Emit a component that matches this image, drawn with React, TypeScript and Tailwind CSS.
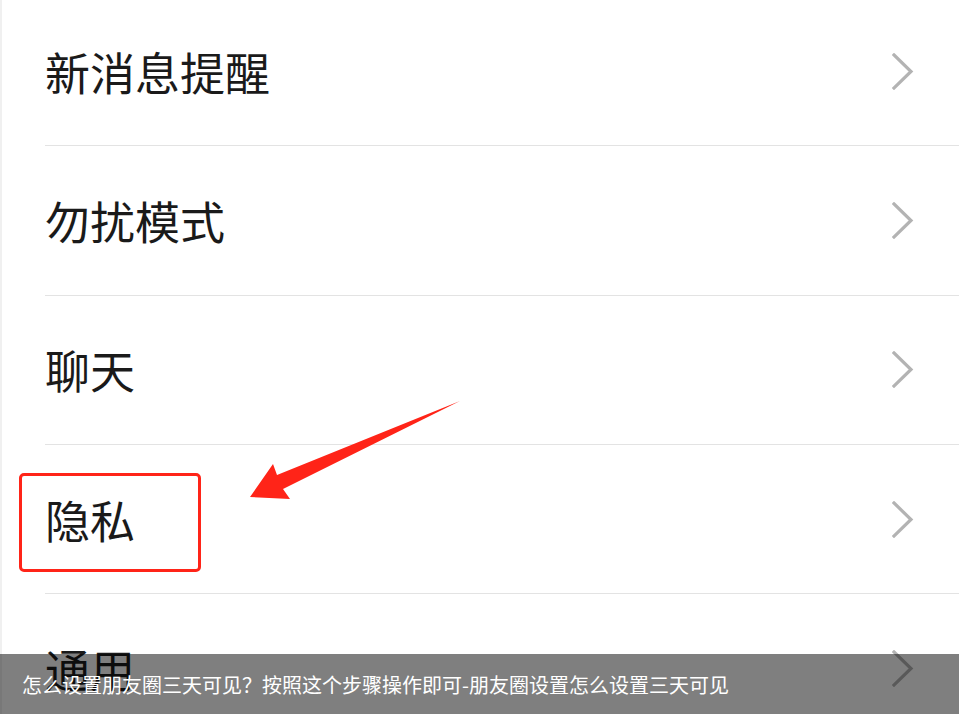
import React from "react";

const items = ["新消息提醒", "勿扰模式", "聊天", "隐私", "通用"];

function Chevron() {
  return (
    <svg width="22" height="37" viewBox="0 0 22 37" className="shrink-0">
      <polyline points="2,2 19,18.5 2,35" fill="none" stroke="#b3b3b3" strokeWidth="3.2" strokeLinecap="square" strokeLinejoin="miter" />
    </svg>
  );
}

export default function App() {
  return (
    <div
      className="relative w-[959px] h-[714px] overflow-hidden bg-white"
      style={{ fontFamily: '"Noto Sans CJK SC", "Noto Sans", sans-serif' }}
    >
      <div className="absolute left-0 top-0 h-full w-[2px] bg-[#f0f0f0]" />
      <div className="-mt-[3px] flex flex-col">
        {items.map((t, i) => (
          <div key={t} className="flex flex-col">
            <div className="flex h-[148.3px] items-center justify-between pl-[45px] pr-[45px]">
              <span className="text-[45px] leading-none text-[#1a1a1a]">{t}</span>
              <Chevron />
            </div>
            <div className="ml-[45px] h-px bg-[#e3e3e3]" />
          </div>
        ))}
      </div>

      {/* red box annotation */}
      <div className="absolute left-[19px] top-[473px] h-[99px] w-[182px] rounded-[5px] border-[3px] border-[#ff2418]" />

      {/* red arrow */}
      <svg className="absolute left-0 top-0" width="959" height="714" viewBox="0 0 959 714">
        <polygon
          points="250,497 273,464 277,475 460,401 283,489 290,499"
          fill="#ff2418"
        />
      </svg>

      {/* bottom caption bar */}
      <div className="absolute bottom-0 left-0 flex h-[60px] w-full items-center bg-black/50 pl-[22px] pt-[2px]">
        <span className="text-[20px] leading-none text-white">
          怎么设置朋友圈三天可见？按照这个步骤操作即可-朋友圈设置怎么设置三天可见
        </span>
      </div>
    </div>
  );
}
